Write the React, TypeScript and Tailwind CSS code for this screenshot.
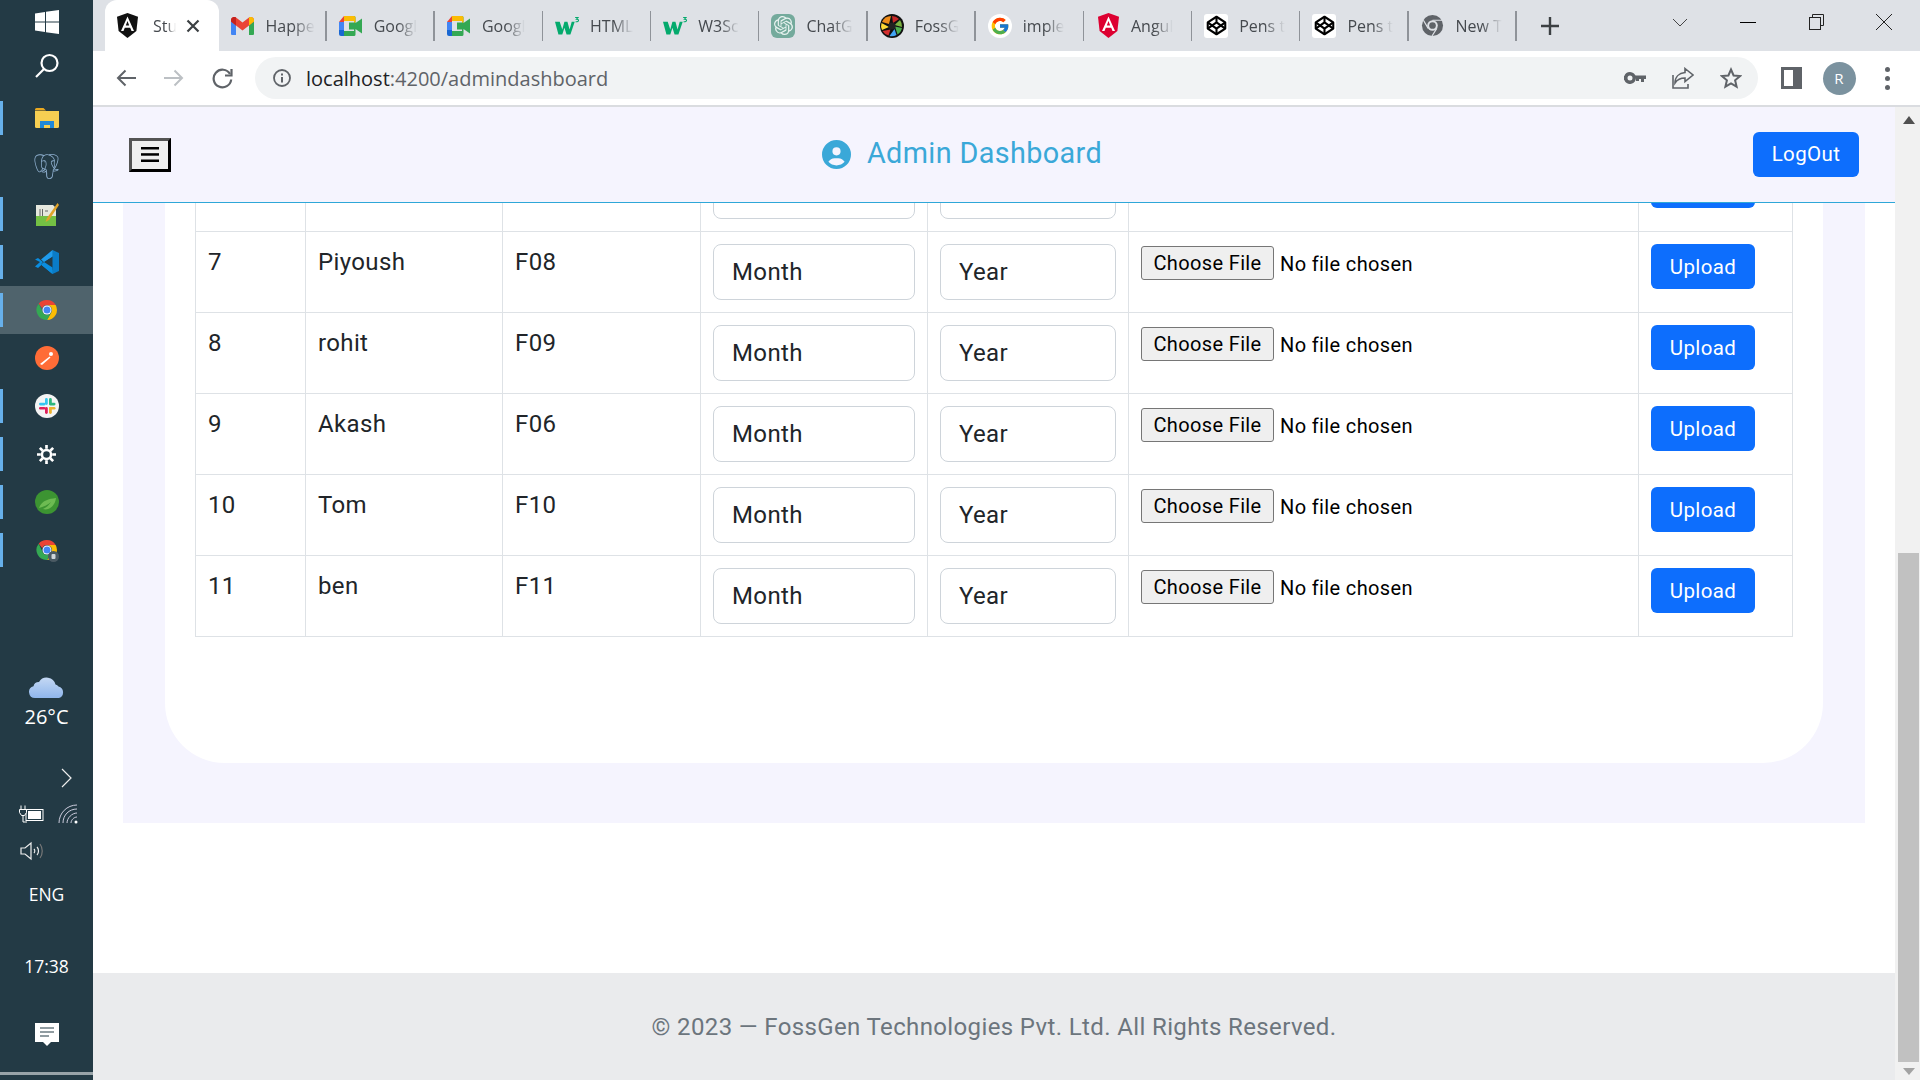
import React from 'react';
import { SiOpenai, SiPostgresql } from 'react-icons/si';
import { FcGoogle } from 'react-icons/fc';
import { FaCircleUser } from 'react-icons/fa6';

const Chrome = ({ size = 24 }: { size?: number }) => (
  <svg width={size} height={size} viewBox="0 0 48 48">
    <path d="M24 4a20 20 0 0 1 17.3 10H24a10 10 0 0 0-9.4 6.6L7.4 11.5A20 20 0 0 1 24 4z" fill="#ea4335" />
    <path d="M41.3 14A20 20 0 0 1 24 44l8.6-15A10 10 0 0 0 24 14z" fill="#fbbc04" />
    <path d="M24 44A20 20 0 0 1 7.4 11.5l8.3 17.5A10 10 0 0 0 32.6 29L24 44z" fill="#34a853" />
    <circle cx="24" cy="24" r="9" fill="#fff" />
    <circle cx="24" cy="24" r="7" fill="#4285f4" />
  </svg>
);

const Gmail = () => (
  <svg width="23" height="18" viewBox="0 0 46 36">
    <path d="M0 32V8l10 8v20H3a3 3 0 0 1-3-4z" fill="#4285f4" />
    <path d="M46 32V8l-10 8v20h7a3 3 0 0 0 3-4z" fill="#34a853" />
    <path d="M0 9V6c0-5 6-8 10-5l13 10 13-10c4-3 10 0 10 5v3L36 17 23 27 10 17z" fill="#ea4335" />
    <path d="M36 1c4-3 10 0 10 5v3L36 17z" fill="#fbbc04" />
    <path d="M0 9V6c0-5 6-8 10-5v16z" fill="#c5221f" />
  </svg>
);

const Meet = () => (
  <svg width="23" height="20" viewBox="0 0 46 40">
    <path d="M10 0h20v10H10z" fill="#fbbc04" />
    <path d="M10 0v12H0z" fill="#ea4335" />
    <path d="M0 12h10v16H0z" fill="#4285f4" />
    <path d="M0 28h10v12H4a4 4 0 0 1-4-4z" fill="#1967d2" />
    <path d="M10 30h20v10H10z" fill="#34a853" />
    <path d="M30 0a3 3 0 0 1 3 3v11l13-9v30l-13-9v11a3 3 0 0 1-3 3V27H20v-14h10z" fill="#34a853" />
    <path d="M30 0a3 3 0 0 1 3 3v10h-3z" fill="#fbbc04" />
  </svg>
);

const W3 = () => (
  <svg width="25" height="20" viewBox="0 0 56 44">
    <path d="M0 12h11l6 18 5-18h7l5 18 5-18h7l-10 30h-9l-5-16-5 16h-9z" fill="#04aa6d" />
    <path d="M47 2h7l-4 4c3 0 5 1 5 3s-3 4-7 3" fill="none" stroke="#04aa6d" strokeWidth="2.4" />
  </svg>
);

const ChatGpt = () => (
  <span className="flex h-6 w-6 items-center justify-center rounded-[6px] bg-[#74aa9c]">
    <SiOpenai size={19} color="#e8f3f0" />
  </span>
);

const FossGen = () => (
  <svg width="24" height="24" viewBox="0 0 48 48">
    <circle cx="24" cy="24" r="24" fill="#111" />
    <path d="M24 4a20 20 0 0 1 14 6L26 18z" fill="#c62828" />
    <path d="M40 12a20 20 0 0 1 4 14l-15-4z" fill="#7cb342" />
    <path d="M44 28a20 20 0 0 1-9 13l-5-16z" fill="#4caf50" />
    <path d="M33 42a20 20 0 0 1-14 2l10-14z" fill="#42a5f5" />
    <path d="M17 43a20 20 0 0 1-12-9l16-3z" fill="#d32f2f" />
    <path d="M4 32a20 20 0 0 1-1-14l15 8z" fill="#fdd835" />
    <path d="M4 16a20 20 0 0 1 18-12l-4 16z" fill="#ef8c1a" />
    <circle cx="24" cy="24" r="7" fill="#222" />
  </svg>
);

const Google = () => (
  <span className="flex h-6 w-6 items-center justify-center rounded-full bg-white">
    <FcGoogle size={20} />
  </span>
);

const Shield = ({ fill }: { fill: string }) => (
  <svg width="21" height="25" viewBox="0 0 21 25">
    <path d="M10.5 0 21 3.7 19.400 18 10.500 25 1.600 18 0 3.700z" fill={fill} />
    <path d="M10.500 3.500 4 18h2.500l1.300-3.300h5.400L14.500 18H17zM8.800 12.500l1.700-4.500 1.700 4.500z" fill="#fff" />
  </svg>
);

const CodePen = () => (
  <span className="flex h-6 w-6 items-center justify-center rounded-[3px] bg-white">
    <svg width="21" height="21" viewBox="0 0 24 24" fill="none" stroke="#000" strokeWidth="2.4" strokeLinejoin="round">
      <path d="M12 2 22 8.500v7L12 22 2 15.500v-7z" />
      <path d="M12 2v6.500M12 15.500V22M2 8.500l10 7 10-7M2 15.500l10-7 10 7" />
    </svg>
  </span>
);

const GreyChrome = () => (
  <svg width="23" height="23" viewBox="0 0 48 48">
    <circle cx="24" cy="24" r="22" fill="#5f6368" />
    <circle cx="24" cy="24" r="11" fill="#dee1e6" />
    <circle cx="24" cy="24" r="7" fill="#5f6368" />
    <path d="M24 13h20M33 30 23 46M15 30 5 13" stroke="#dee1e6" strokeWidth="2.5" />
  </svg>
);

const tabs = [
  { title: 'Happe', icon: <Gmail /> },
  { title: 'Googl', icon: <Meet /> },
  { title: 'Googl', icon: <Meet /> },
  { title: 'HTML', icon: <W3 /> },
  { title: 'W3Sc', icon: <W3 /> },
  { title: 'ChatG', icon: <ChatGpt /> },
  { title: 'FossG', icon: <FossGen /> },
  { title: 'imple', icon: <Google /> },
  { title: 'Angul', icon: <Shield fill="#dd0031" /> },
  { title: 'Pens t', icon: <CodePen /> },
  { title: 'Pens t', icon: <CodePen /> },
  { title: 'New T', icon: <GreyChrome /> },
];

const Folder = () => (
  <svg width="24" height="20" viewBox="0 0 24 20">
    <path d="M0 1.5A1.5 1.5 0 0 1 1.5 0h7L11 2.5H0z" fill="#e9a820" />
    <path d="M0 3h24v15.5a1.5 1.5 0 0 1-1.5 1.5h-21A1.5 1.5 0 0 1 0 18.5z" fill="#f7cf52" />
    <path d="M5 20v-7h14v7h-4v-3H9v3z" fill="#1f88d9" />
  </svg>
);

const Notepad = () => (
  <svg width="24" height="24" viewBox="0 0 24 24">
    <path d="M1 3h17l3 3v18H1z" fill="#e6e8de" />
    <path d="M1 14h20v10H1z" fill="#74c044" />
    <path d="M5 7v7M7.500 7v7M10 9h3" stroke="#666" strokeWidth="1" />
    <path d="M22.500 1 12 16l-1.500 4 3.500-2L24 3z" fill="#e0a32a" />
  </svg>
);

const VsCode = () => (
  <svg width="24" height="24" viewBox="0 0 24 24">
    <path d="M17.500 0 24 3v18l-6.500 3z" fill="#0a7cc8" />
    <path d="M17.500 0v6.500L8 12 3 8 0 9.500 5 12l-5 4.500L3 18l5-4.500 9.500 6.500v4L6 14.500z" fill="#0a8de0" />
    <path d="M17.500 0 6 9.500l3 2.500 8.500-5.500z" fill="#1f9cee" />
    <path d="M17.500 24 6 14.500l3-2.500 8.500 5.500z" fill="#0a8de0" />
  </svg>
);

const Postman = () => (
  <svg width="24" height="24" viewBox="0 0 24 24">
    <circle cx="12" cy="12" r="12" fill="#ff6c37" />
    <path d="M5 18 14.500 10.500l1 1-8.500 7.500z" fill="#fff" />
    <circle cx="16" cy="8" r="2" fill="#fff" />
  </svg>
);

const Slack = () => (
  <svg width="24" height="24" viewBox="0 0 24 24">
    <circle cx="12" cy="12" r="12" fill="#f4f4f4" />
    <rect x="10" y="4" width="2.8" height="7" rx="1.4" fill="#36c5f0" />
    <rect x="4" y="8.8" width="6.5" height="2.6" rx="1.3" fill="#36c5f0" />
    <rect x="14" y="4" width="2.8" height="7" rx="1.4" fill="#2eb67d" />
    <rect x="14" y="8.8" width="6.5" height="2.6" rx="1.3" fill="#2eb67d" />
    <rect x="14" y="13" width="2.8" height="7" rx="1.4" fill="#ecb22e" />
    <rect x="14" y="13" width="6.5" height="2.6" rx="1.3" fill="#ecb22e" />
    <rect x="10" y="13" width="2.8" height="7" rx="1.4" fill="#e01e5a" />
    <rect x="4" y="13" width="6.5" height="2.6" rx="1.3" fill="#e01e5a" />
  </svg>
);

const Gear = () => (
  <svg width="19" height="19" viewBox="0 0 20 20" fill="none" stroke="#fff">
    <circle cx="10" cy="10" r="4.800" strokeWidth="2.600" />
    <path d="M10 0v4M10 16v4M0 10h4M16 10h4M3 3l3 3M14 14l3 3M17 3l-3 3M6 14l-3 3" strokeWidth="2.800" />
  </svg>
);

const Spring = () => (
  <svg width="24" height="24" viewBox="0 0 24 24">
    <circle cx="12" cy="12" r="12" fill="#3c9432" />
    <path d="M4 18c3-8 10-9 17-10-1 8-7 13-13 11 4-2 6-4 8-7-3 3-8 5-12 6z" fill="#6dbb52" />
  </svg>
);

const ProfileChrome = () => (
  <svg width="24" height="24" viewBox="0 0 48 48">
    <path d="M24 4a20 20 0 0 1 17.3 10H24a10 10 0 0 0-9.4 6.6L7.4 11.5A20 20 0 0 1 24 4z" fill="#ea4335" />
    <path d="M41.300 14A20 20 0 0 1 24 44l8.600-15A10 10 0 0 0 24 14z" fill="#fbbc04" />
    <path d="M24 44A20 20 0 0 1 7.400 11.500l8.300 17.500A10 10 0 0 0 32.600 29L24 44z" fill="#34a853" />
    <circle cx="24" cy="24" r="9" fill="#fff" />
    <circle cx="24" cy="24" r="7" fill="#4285f4" />
    <circle cx="37" cy="37" r="11" fill="#4a5a63" />
    <rect x="33" y="32" width="8" height="10" rx="2" fill="#cfd6da" />
  </svg>
);

const pinned = [
  { icon: <Folder />, open: true },
  { icon: <SiPostgresql size={25} color="#8fb0d0" />, open: false },
  { icon: <Notepad />, open: true },
  { icon: <VsCode />, open: true },
  { icon: <Chrome />, open: true, active: true },
  { icon: <Postman />, open: false },
  { icon: <Slack />, open: true },
  { icon: <Gear />, open: true },
  { icon: <Spring />, open: true },
  { icon: <ProfileChrome />, open: true },
];

const Sidebar = () => (
  <aside className="flex h-full w-[93px] shrink-0 flex-col bg-[#233a45] font-['Open_Sans',sans-serif] text-white">
    <div className="flex h-[44px] items-center justify-center">
      <svg width="24" height="24" viewBox="0 0 24 24" fill="#fff">
        <path d="M0 3.5 10 2v9.5H0zM11 1.8 24 0v11.5H11zM0 12.500h10V22L0 20.500zM11 12.500h13V24l-13-1.800z" />
      </svg>
    </div>
    <div className="flex h-[44px] items-center justify-center">
      <svg width="26" height="26" viewBox="0 0 26 26" fill="none" stroke="#fff" strokeWidth="2.2">
        <circle cx="15.500" cy="10" r="8" />
        <path d="M10 16 2 24" />
      </svg>
    </div>
    <div className="mt-[6px] flex flex-col">
      {pinned.map((item, i) => (
        <div
          key={i}
          className={`flex h-[48px] items-center ${item.active ? 'bg-[#4f636c]' : ''}`}
        >
          <span className={`h-[34px] w-[3px] ${item.open ? 'bg-[#67b0ea]' : ''}`} />
          <span className="flex flex-1 items-center justify-center pr-[3px]">{item.icon}</span>
        </div>
      ))}
    </div>

    <div className="mt-auto flex flex-col items-center">
      <div className="flex h-[28px] items-center justify-center">
        <svg width="36" height="24" viewBox="0 0 36 24">
          <defs>
            <linearGradient id="cloud" x1="0" y1="0" x2="0" y2="1">
              <stop offset="0" stopColor="#c4d8f4" />
              <stop offset="1" stopColor="#8fb6ec" />
            </linearGradient>
          </defs>
          <path
            d="M6 24a6 6 0 0 1-1.500-11.800A5.500 5.500 0 0 1 10 8a9 9 0 0 1 16.500 2.500 4.500 4.500 0 0 1 3 2A6 6 0 0 1 30 24z"
            fill="url(#cloud)"
          />
        </svg>
      </div>
      <div className="flex h-[34px] items-center text-[20px]">26°C</div>
      <div className="mt-[28px] flex h-[32px] w-full items-center justify-end pr-[20px]">
        <svg width="12" height="20" viewBox="0 0 12 20" fill="none" stroke="#eee" strokeWidth="1.2">
          <path d="M1 1l9 9-9 9" />
        </svg>
      </div>
      <div className="flex h-[40px] w-full items-center justify-between pl-[19px] pr-[15px]">
        <svg width="25" height="18" viewBox="0 0 25 18" fill="none" stroke="#fff" strokeWidth="1">
          <rect x="7" y="4.500" width="17" height="11" />
          <rect x="9" y="6" width="13" height="8" fill="#fff" strokeWidth="0" />
          <path d="M2 .5v4M6 .5v4" />
          <path d="M.5 4.500h7v3l-2 3h-3l-2-3z" fill="#233a45" />
          <path d="M4 10.500v6.500h4" />
        </svg>
        <svg width="20" height="20" viewBox="0 0 20 20" fill="none" stroke="#ccd" strokeWidth="1">
          <path d="M1 19C1 9 9 1 19 1M5 19C5 11 11 5 19 5M9 19c0-5 5-10 10-10M13 19c0-3 3-6 6-6" />
          <circle cx="18" cy="18" r="1.500" fill="#fff" stroke="none" />
        </svg>
      </div>
      <div className="flex h-[34px] w-full items-center pl-[20px]">
        <svg width="24" height="20" viewBox="0 0 24 20" fill="none" stroke="#eee" strokeWidth="1.2">
          <path d="M1 7v6h4l6 5V2L5 7z" />
          <path d="M14 8c1 1 1 3 0 4M17 6c2 2 2 6 0 8" />
          <path d="M20 3c3 4 3 10 0 14" stroke="#777" />
        </svg>
      </div>
      <div className="flex h-[52px] items-center text-[17.5px]">ENG</div>
      <div className="flex h-[92px] items-center text-[17.5px]">17:38</div>
      <div className="flex h-[46px] items-center justify-center">
        <svg width="24" height="24" viewBox="0 0 24 24">
          <path d="M0 0h24v19h-8l-4 4-4-4H0z" fill="#fff" />
          <path d="M5 5h14M5 9h14M5 13h9" stroke="#233a45" strokeWidth="1.200" />
        </svg>
      </div>
      <div className="mt-[14px] h-[3px] w-full bg-[#98a3a8]" />
      <div className="h-[5px]" />
    </div>
  </aside>
);

const TabStrip = () => (
  <div className="flex h-[51px] shrink-0 items-stretch bg-[#dee1e6] pl-[12px] font-['Open_Sans',sans-serif] text-[16px] text-[#45494e]">
    <div className="flex w-[113.5px] items-center rounded-t-[12px] bg-white pl-[12px]">
      <Shield fill="#111" />
      <span className="ml-[15px] w-[23px] whitespace-nowrap [mask-image:linear-gradient(to_right,black_60%,transparent)]">
        Stu
      </span>
      <svg className="ml-[10px]" width="14" height="14" viewBox="0 0 14 14" stroke="#3c4043" strokeWidth="2.200">
        <path d="M1.500 1.500l11 11M12.500 1.500l-11 11" />
      </svg>
    </div>
    {tabs.map((tab, i) => (
      <div key={i} className="flex w-[108.2px] items-center pl-[12px]">
        <span className="flex w-[24px] items-center justify-center">{tab.icon}</span>
        <span className="ml-[11px] whitespace-nowrap [mask-image:linear-gradient(to_right,black_55%,transparent)]">
          {tab.title}
        </span>
        <span className="ml-auto h-[30px] w-[1.500px] bg-[#8f9399]" />
      </div>
    ))}
    <div className="ml-[24px] flex items-center">
      <svg width="18" height="18" viewBox="0 0 18 18" stroke="#3c4043" strokeWidth="2.400">
        <path d="M9 0v18M0 9h18" />
      </svg>
    </div>
    <div className="ml-auto flex h-[44px] pr-[2px]">
      <div className="flex w-[68px] items-center justify-center">
        <svg width="16" height="9" viewBox="0 0 16 9" fill="none" stroke="#333" strokeWidth="0.900">
          <path d="M1 1l7 7 7-7" />
        </svg>
      </div>
      <div className="flex w-[68px] items-center justify-center">
        <span className="h-px w-[16px] bg-black" />
      </div>
      <div className="flex w-[68px] items-center justify-center">
        <svg width="15" height="16" viewBox="0 0 15 16" fill="none" stroke="#222" strokeWidth="1">
          <path d="M3.500 3V.5h11v11H11.500" />
          <rect x=".5" y="3.500" width="11" height="12" />
        </svg>
      </div>
      <div className="flex w-[68px] items-center justify-center">
        <svg width="16" height="16" viewBox="0 0 16 16" stroke="#222" strokeWidth="1">
          <path d="M0 0l16 16M16 0 0 16" />
        </svg>
      </div>
    </div>
  </div>
);

const Toolbar = () => (
  <div className="flex h-[56px] shrink-0 items-start border-b-2 border-[#dadce0] bg-white px-[9px] pt-[6px]">
    <div className="flex h-[42px] w-[48px] items-center justify-center">
      <svg width="20" height="18" viewBox="0 0 20 18" fill="none" stroke="#5f6368" strokeWidth="2">
        <path d="M20 9H2M9.500 1.500 2 9l7.500 7.500" />
      </svg>
    </div>
    <div className="flex h-[42px] w-[48px] items-center justify-center">
      <svg width="20" height="18" viewBox="0 0 20 18" fill="none" stroke="#bcc0c4" strokeWidth="2">
        <path d="M0 9h18M10.500 1.500 18 9l-7.500 7.500" />
      </svg>
    </div>
    <div className="flex h-[42px] w-[48px] items-center justify-center">
      <svg width="21" height="21" viewBox="0 0 21 21" fill="none" stroke="#5f6368" strokeWidth="2.200">
        <path d="M18 6a8.800 8.800 0 1 0 1.200 5.500" />
        <path d="M19.500 1v6.500H13" />
      </svg>
    </div>
    <div className="ml-[9px] flex h-[42px] flex-1 items-center rounded-full bg-[#f1f3f4] pl-[18px] pr-[3px]">
      <svg width="18" height="18" viewBox="0 0 18 18" fill="none" stroke="#5f6368">
        <circle cx="9" cy="9" r="8" strokeWidth="1.800" />
        <path d="M9 8v5.500M9 4.500v2" strokeWidth="2" />
      </svg>
      <span className="ml-[15px] pt-[2px] text-[20px] leading-none text-[#5f6368] font-['Open_Sans',sans-serif]">
        <span className="text-[#202124]">localhost</span>:4200/admindashboard
      </span>
      <div className="ml-auto flex">
        <div className="flex w-[48px] items-center justify-center">
          <svg width="22" height="12" viewBox="0 0 22 12" fill="#5f6368">
            <path d="M6 0a6 6 0 1 1-5.700 8H0V4h.3A6 6 0 0 1 6 0zm0 3.500a2.500 2.500 0 1 0 0 5 2.500 2.500 0 0 0 0-5z" />
            <path d="M10 3.500h12v3.500h-2v3h-3V7h-2v2h-3V7z" />
          </svg>
        </div>
        <div className="flex w-[48px] items-center justify-center">
          <svg width="22" height="22" viewBox="0 0 22 22" fill="none" stroke="#5f6368" strokeWidth="1.600">
            <path d="M13 1.500 21 8l-8 6.500V11c-5 0-8 2-10 5 0-6 4-10 10-10.500zM1 8v13h15v-4" />
          </svg>
        </div>
        <div className="flex w-[48px] items-center justify-center">
          <svg width="22" height="22" viewBox="0 0 22 22" fill="none" stroke="#5f6368" strokeWidth="2">
            <path d="M11 2.500 13.600 8.500l6.400.6-4.900 4.200 1.500 6.300L11 16.300 5.400 19.600l1.500-6.300L2 9.100l6.400-.6z" />
          </svg>
        </div>
      </div>
    </div>
    <div className="ml-[9px] flex h-[42px] w-[48px] items-center justify-center">
      <svg width="21" height="22" viewBox="0 0 21 22">
        <rect width="21" height="22" fill="#5f6368" />
        <rect x="3" y="3" width="9" height="16" fill="#fff" />
      </svg>
    </div>
    <div className="flex h-[42px] w-[48px] items-center justify-center">
      <span className="flex h-[33px] w-[33px] items-center justify-center rounded-full bg-[#7b929f] font-['Open_Sans',sans-serif] text-[15px] text-white">
        R
      </span>
    </div>
    <div className="flex h-[42px] w-[48px] flex-col items-center justify-center gap-[4px]">
      <span className="h-[5px] w-[5px] rounded-full bg-[#5f6368]" />
      <span className="h-[5px] w-[5px] rounded-full bg-[#5f6368]" />
      <span className="h-[5px] w-[5px] rounded-full bg-[#5f6368]" />
    </div>
  </div>
);

const rows = [
  { no: '7', name: 'Piyoush', code: 'F08' },
  { no: '8', name: 'rohit', code: 'F09' },
  { no: '9', name: 'Akash', code: 'F06' },
  { no: '10', name: 'Tom', code: 'F10' },
  { no: '11', name: 'ben', code: 'F11' },
];

const cell = 'border border-[#dee2e6] p-3 align-top';
const monthBox = 'block h-[56px] w-[202px] appearance-none rounded-[8px] border border-[#ced4da] bg-white pl-[18px] text-[24px]';
const yearBox = 'block h-[56px] w-[176px] appearance-none rounded-[8px] border border-[#ced4da] bg-white pl-[18px] text-[24px]';
const uploadBtn = 'block h-[45px] w-[104px] rounded-[6px] bg-[#0d6efd] text-[20.5px] text-white';

const StudentTable = () => (
  <table className="-mt-[53px] w-full table-fixed border-collapse text-[24px] leading-[36px] text-[#212529]">
    <colgroup>
      <col className="w-[110px]" />
      <col className="w-[197px]" />
      <col className="w-[198px]" />
      <col className="w-[227px]" />
      <col className="w-[201px]" />
      <col className="w-[510px]" />
      <col className="w-[154px]" />
    </colgroup>
    <tbody>
      {/* row scrolled away under the header, only the bottom of its controls shows */}
      <tr className="h-[81px]">
        <td className={cell} />
        <td className={cell} />
        <td className={cell} />
        <td className={cell}>
          <div className={monthBox} />
        </td>
        <td className={cell}>
          <div className={yearBox} />
        </td>
        <td className={cell} />
        <td className={cell}>
          <div className={uploadBtn} />
        </td>
      </tr>
      {rows.map((row) => (
        <tr key={row.no} className="h-[81px]">
          <td className={cell}>{row.no}</td>
          <td className={cell}>{row.name}</td>
          <td className={cell}>{row.code}</td>
          <td className={cell}>
            <select className={monthBox}>
              <option>Month</option>
            </select>
          </td>
          <td className={cell}>
            <select className={yearBox}>
              <option>Year</option>
            </select>
          </td>
          <td className={cell}>
            <div className="flex items-start">
              <button className="mt-[2px] h-[34px] w-[133px] rounded-[3px] border border-[#767676] bg-[#efefef] text-[20px] leading-none text-black">
                Choose File
              </button>
              <span className="ml-[6px] mt-[2px] text-[20px] leading-[36px] text-black">No file chosen</span>
            </div>
          </td>
          <td className={cell}>
            <button className={uploadBtn}>Upload</button>
          </td>
        </tr>
      ))}
    </tbody>
  </table>
);

const Scrollbar = () => (
  <div className="flex h-full w-[25px] shrink-0 flex-col items-center bg-[#f1f1f1] pl-[2px]">
    <div className="flex h-[25px] items-center justify-center">
      <svg width="12" height="8" viewBox="0 0 12 8" fill="#505050">
        <path d="M6 0l6 8H0z" />
      </svg>
    </div>
    <div className="flex-1" />
    <div className="h-[509px] w-[21px] bg-[#c1c1c1]" />
    <div className="flex h-[18px] items-center justify-center">
      <svg width="12" height="7" viewBox="0 0 12 7" fill="#a3a3a3">
        <path d="M6 7 12 0H0z" />
      </svg>
    </div>
  </div>
);

export default function App() {
  return (
    <div className="flex h-screen w-screen overflow-hidden bg-white font-['Roboto',sans-serif]">
      <Sidebar />
      <div className="flex min-w-0 flex-1 flex-col">
        <TabStrip />
        <Toolbar />
        <div className="flex min-h-0 flex-1">
          <main className="flex min-w-0 flex-1 flex-col tracking-[0.37px]">
            <header className="flex h-[96px] shrink-0 items-center justify-between border-b border-[#2ea7d8] bg-[#f5f4fe] pl-[36px] pr-[36px]">
              <button className="flex h-[34px] w-[42px] items-center justify-center border-[3px] border-black bg-[#efefef] [border-style:outset]">
                <svg width="18" height="15" viewBox="0 0 18 15" fill="#000">
                  <rect width="18" height="2.500" />
                  <rect y="6.200" width="18" height="2.500" />
                  <rect y="12.500" width="18" height="2.500" />
                </svg>
              </button>
              <h1 className="mb-[1px] flex items-center text-[28.8px] font-normal text-[#3aa8d8]">
                <FaCircleUser size={29} color="#3aa8d8" />
                <span className="ml-[16px]">Admin Dashboard</span>
              </h1>
              <button className="h-[45px] w-[106px] rounded-[6px] bg-[#0d6efd] text-[20.5px] text-white">
                LogOut
              </button>
            </header>
            <div className="min-h-0 flex-1 overflow-hidden">
              <div className="mx-[30px] h-[620px] bg-[#f5f4fe]">
                <div className="ml-[42px] mr-[42px] h-[560px] overflow-hidden rounded-b-[60px] bg-white pl-[30px] pr-[31px]">
                  <StudentTable />
                </div>
              </div>
            </div>
            <footer className="flex h-[107px] shrink-0 items-center justify-center bg-[#eaebed] text-[24px] text-[#6c757d]">
              © 2023 — FossGen Technologies Pvt. Ltd. All Rights Reserved.
            </footer>
          </main>
          <Scrollbar />
        </div>
      </div>
    </div>
  );
}
